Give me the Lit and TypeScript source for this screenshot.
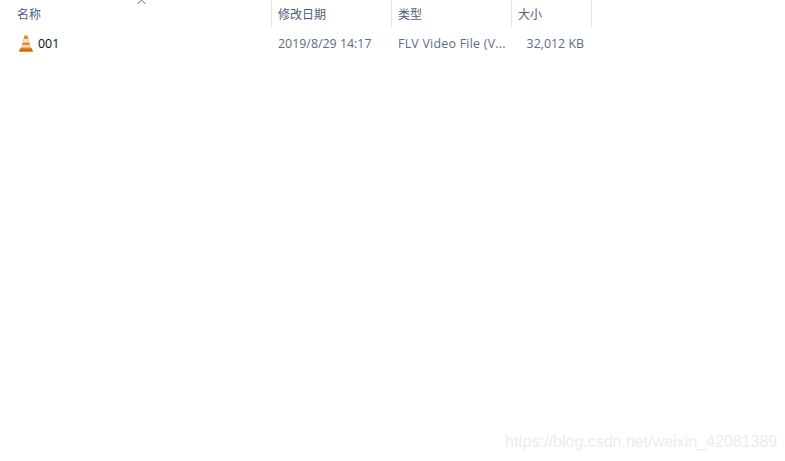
import { LitElement, html, css } from "lit";
import { customElement } from "lit/decorators.js";

@customElement("app-root")
export class AppRoot extends LitElement {
  static styles = css`
    :host {
      display: block;
      position: relative;
      width: 785px;
      height: 461px;
      overflow: hidden;
      background: #fff;
      font-family: "Noto Sans CJK SC", "Open Sans", sans-serif;
      font-size: 12px;
    }
    .grid {
      display: grid;
      grid-template-columns: 272px 120px 120px 80px;
      width: 592px;
    }
    .head {
      height: 27px;
      display: flex;
      align-items: center;
      padding-left: 6px;
      box-sizing: border-box;
      border-right: 1px solid #e5e5e5;
      color: #4c607a;
      line-height: 1;
    }
    .head.first {
      padding-left: 17px;
      position: relative;
    }
    .chev {
      position: absolute;
      left: 137px;
      top: -1px;
      width: 9px;
      height: 6px;
    }
    .row {
      height: 24px;
      margin-top: 4px;
      display: flex;
      align-items: center;
      padding-left: 6px;
      color: #5b6c84;
      font-family: "Open Sans", sans-serif;
      font-size: 12.4px;
      white-space: nowrap;
    }
    .row.type {
      letter-spacing: 0.25px;
    }
    .row.name {
      padding-left: 19px;
      gap: 5px;
      color: #0a0a14;
    }
    .row.size {
      justify-content: flex-end;
      padding: 0 8px 0 0;
    }
    .cone {
      width: 14px;
      height: 17px;
      display: block;
    }
    .mark {
      position: absolute;
      left: 505px;
      top: 433px;
      font: 16px "Liberation Sans", sans-serif;
      color: #ececec;
      white-space: nowrap;
    }
  `;

  render() {
    return html`
      <div class="grid">
        <div class="head first">
          名称
          <svg class="chev" viewBox="0 0 9 6" fill="none" stroke="#6b6b6b" stroke-width="1">
            <path d="M0.5 5L4.5 1L8.5 5" />
          </svg>
        </div>
        <div class="head">修改日期</div>
        <div class="head">类型</div>
        <div class="head">大小</div>

        <div class="row name">
          <svg class="cone" viewBox="0 0 14 17">
            <path d="M1.5 13H12.5L14 16.5H0Z" fill="#e8760c" />
            <path d="M5.4 0.5H8.6L11.8 13.5H2.2Z" fill="#ef8a1e" />
            <path d="M4.8 4H9.2L10 7.5H4Z" fill="#e4e4e4" />
            <path d="M3.4 10H10.6L11.2 12.5H2.8Z" fill="#dcdcdc" />
            <path d="M1 14.5H13L14 16.5H0Z" fill="#d9620a" />
          </svg>
          001
        </div>
        <div class="row">2019/8/29 14:17</div>
        <div class="row type">FLV Video File (V...</div>
        <div class="row size">32,012 KB</div>
      </div>
      <div class="mark">https://blog.csdn.net/weixin_42081389</div>
    `;
  }
}
